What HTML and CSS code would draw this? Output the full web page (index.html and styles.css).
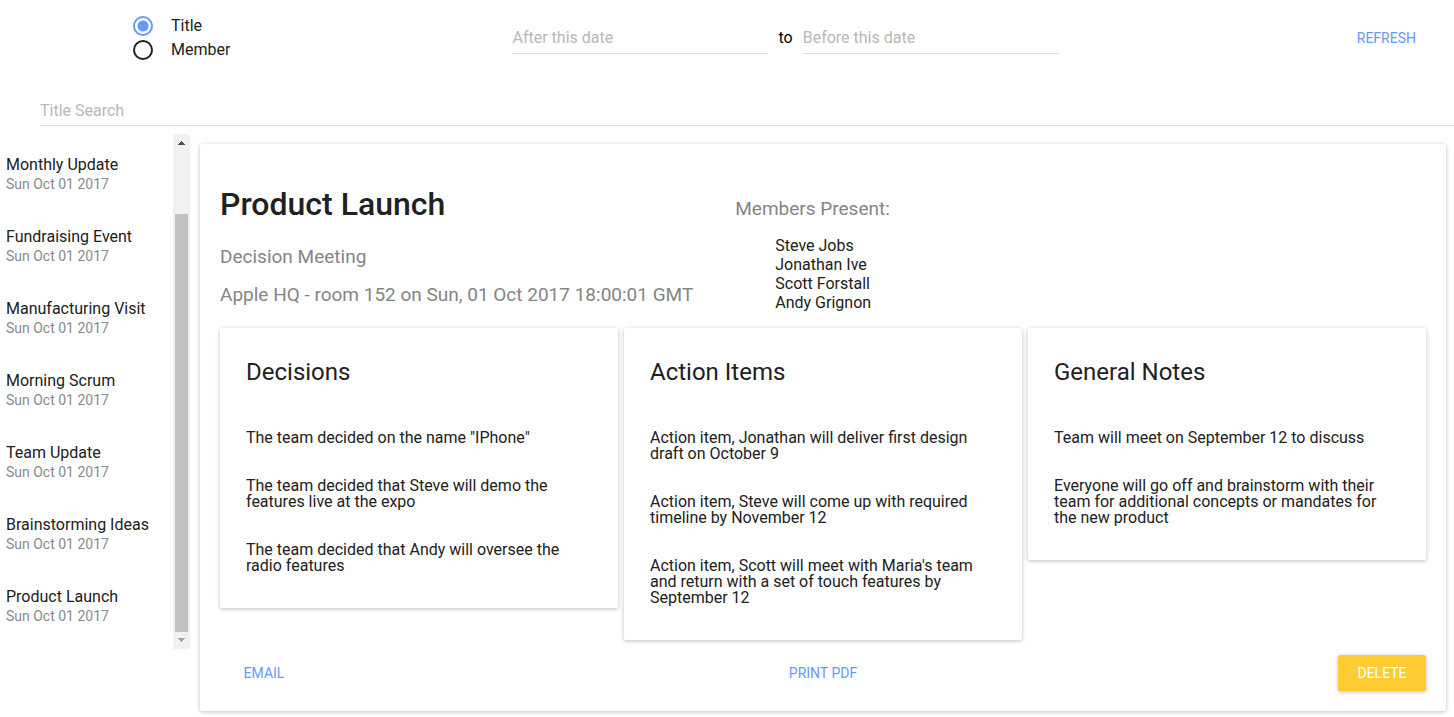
FILE: index.html
```html
<!DOCTYPE html>
<html lang="en">
<head>
<meta charset="utf-8">
<title>Meetings</title>
<link rel="stylesheet" href="styles.css">
</head>
<body>
<header class="filters">
  <div class="search-by" role="radiogroup" aria-label="Search by">
    <label class="choice"><input class="radio" type="radio" name="search-by" checked>Title</label>
    <label class="choice"><input class="radio" type="radio" name="search-by">Member</label>
  </div>
  <div class="dates">
    <input class="field date" type="text" placeholder="After this date" aria-label="After this date">
    <span>to</span>
    <input class="field date" type="text" placeholder="Before this date" aria-label="Before this date">
  </div>
  <button class="button" type="button">REFRESH</button>
</header>
<div class="search">
  <input class="field search-field" type="text" placeholder="Title Search" aria-label="Title Search">
</div>
<div class="content">
  <nav class="sidebar" aria-label="Meetings">
    <ul class="meetings">
      <li class="meeting"><span>Monthly Update</span><span class="meeting-date">Sun Oct 01 2017</span></li>
      <li class="meeting"><span>Fundraising Event</span><span class="meeting-date">Sun Oct 01 2017</span></li>
      <li class="meeting"><span>Manufacturing Visit</span><span class="meeting-date">Sun Oct 01 2017</span></li>
      <li class="meeting"><span>Morning Scrum</span><span class="meeting-date">Sun Oct 01 2017</span></li>
      <li class="meeting"><span>Team Update</span><span class="meeting-date">Sun Oct 01 2017</span></li>
      <li class="meeting"><span>Brainstorming Ideas</span><span class="meeting-date">Sun Oct 01 2017</span></li>
      <li class="meeting"><span>Product Launch</span><span class="meeting-date">Sun Oct 01 2017</span></li>
    </ul>
    <div class="scrollbar" aria-hidden="true">
      <svg class="arrow" viewBox="0 0 17 17" shape-rendering="crispEdges"><path fill="#505050" d="M8 7h1v1h1v1h1v1h1v1H5v-1h1V9h1V8h1z"/></svg>
      <div class="track"><div class="thumb"></div></div>
      <svg class="arrow" viewBox="0 0 17 17" shape-rendering="crispEdges"><path fill="#a3a3a3" d="M5 6h7v1h-1v1h-1v1H9v1H8V9H7V8H6V7H5z"/></svg>
    </div>
  </nav>
  <main class="paper details">
    <div class="summary">
      <div>
        <h1 class="title">Product Launch</h1>
        <p class="subtitle">Decision Meeting</p>
        <p class="subtitle">Apple HQ - room 152 on Sun, 01 Oct 2017 18:00:01 GMT</p>
      </div>
      <div class="members">
        <p class="subtitle">Members Present:</p>
        <ul class="member-list">
          <li>Steve Jobs</li>
          <li>Jonathan Ive</li>
          <li>Scott Forstall</li>
          <li>Andy Grignon</li>
        </ul>
      </div>
    </div>
    <div class="notes">
      <section class="paper note">
        <h2 class="note-title">Decisions</h2>
        <ul class="note-list">
          <li>The team decided on the name "IPhone"</li>
          <li>The team decided that Steve will demo the features live at the expo</li>
          <li>The team decided that Andy will oversee the radio features</li>
        </ul>
      </section>
      <section class="paper note">
        <h2 class="note-title">Action Items</h2>
        <ul class="note-list">
          <li>Action item, Jonathan will deliver first design draft on October 9</li>
          <li>Action item, Steve will come up with required timeline by November 12</li>
          <li>Action item, Scott will meet with Maria's team and return with a set of touch features by September 12</li>
        </ul>
      </section>
      <section class="paper note">
        <h2 class="note-title">General Notes</h2>
        <ul class="note-list">
          <li>Team will meet on September 12 to discuss</li>
          <li>Everyone will go off and brainstorm with their team for additional concepts or mandates for the new product</li>
        </ul>
      </section>
    </div>
    <div class="actions">
      <button class="button" type="button">EMAIL</button>
      <button class="button" type="button">PRINT PDF</button>
      <button class="button button-raised" type="button">DELETE</button>
    </div>
  </main>
</div>
</body>
</html>
```

FILE: styles.css
```css
* {
  box-sizing: border-box;
}

body {
  margin: 0;
  background: #fff;
  color: #000;
  font-family: Roboto, sans-serif;
  font-size: 16px;
  line-height: 16px;
}

h1, h2, p, ul {
  margin: 0;
  padding: 0;
  font-weight: 400;
}

ul {
  list-style: none;
}

.filters {
  display: flex;
  justify-content: space-between;
  align-items: center;
  height: 76px;
  padding: 0 22px 0 133px;
}

.choice {
  display: flex;
  align-items: center;
  gap: 18px;
  height: 24px;
  color: #212121;
}

.radio {
  appearance: none;
  width: 20px;
  height: 20px;
  margin: 0;
  border: 2px solid #212121;
  border-radius: 50%;
}

.radio:checked {
  border-color: #6699ff;
  background: radial-gradient(circle, #6699ff 0 5px, transparent 6px);
}

.dates {
  display: flex;
  align-items: center;
  gap: 10px;
}

.field {
  border: 0;
  border-bottom: 1px solid #e0e0e0;
  padding: 0;
  background: transparent;
  color: #212121;
  font: inherit;
  outline: none;
}

.field::placeholder {
  color: #b8b8b8;
}

.date {
  width: 256px;
  height: 32px;
}

.button {
  min-width: 88px;
  height: 36px;
  padding: 0 16px;
  border: 0;
  border-radius: 2px;
  background: transparent;
  color: #6699ff;
  font: inherit;
  font-size: 14px;
}

.button-raised {
  background: #ffcc33;
  color: #fff;
  box-shadow: 0 1px 4px rgba(0, 0, 0, 0.25);
}

.search {
  padding: 20px 0 0 40px;
}

.search-field {
  display: block;
  width: 100%;
  height: 30px;
}

.content {
  display: flex;
  align-items: flex-start;
  gap: 10px;
  padding: 8px 8px 6px 0;
}

.sidebar {
  display: flex;
  flex: none;
  width: 190px;
}

.meetings {
  flex: 1;
  padding: 3px 0 8px 6px;
  color: #212121;
}

.meeting {
  display: flex;
  flex-direction: column;
  gap: 3px;
  padding: 20px 0 17px;
  white-space: nowrap;
}

.meeting-date {
  color: #8a8a8a;
  font-size: 14px;
}

.scrollbar {
  display: flex;
  flex-direction: column;
  width: 17px;
  background: #f1f1f1;
}

.arrow {
  display: block;
  width: 17px;
  height: 17px;
}

.track {
  display: flex;
  flex: 1;
  align-items: flex-end;
  padding: 0 2px;
}

.thumb {
  width: 100%;
  height: 87%;
  background: #c1c1c1;
}

.paper {
  border-radius: 2px;
  background: #fff;
  color: #212121;
  box-shadow: 0 1px 4px rgba(0, 0, 0, 0.25);
}

.details {
  flex: 1;
  margin-top: 10px;
  padding: 0 20px 20px;
}

.summary {
  display: flex;
  gap: 42px;
  padding-top: 41px;
}

.title {
  margin-bottom: 15px;
  font-size: 32px;
  line-height: 38px;
  font-weight: 500;
}

.subtitle {
  color: #858585;
  font-size: 19px;
  line-height: 38px;
}

.members {
  padding-top: 5px;
}

.member-list {
  padding: 8px 0 16px 40px;
  line-height: 19px;
}

.notes {
  display: grid;
  grid-template-columns: repeat(3, 1fr);
  align-items: start;
  gap: 6px;
}

.note {
  padding: 32px 26px 34px;
}

.note-title {
  margin-bottom: 46px;
  font-size: 24px;
  line-height: 24px;
}

.note-list {
  display: grid;
  gap: 32px;
}

.actions {
  display: flex;
  justify-content: space-between;
  padding-top: 15px;
}
```
